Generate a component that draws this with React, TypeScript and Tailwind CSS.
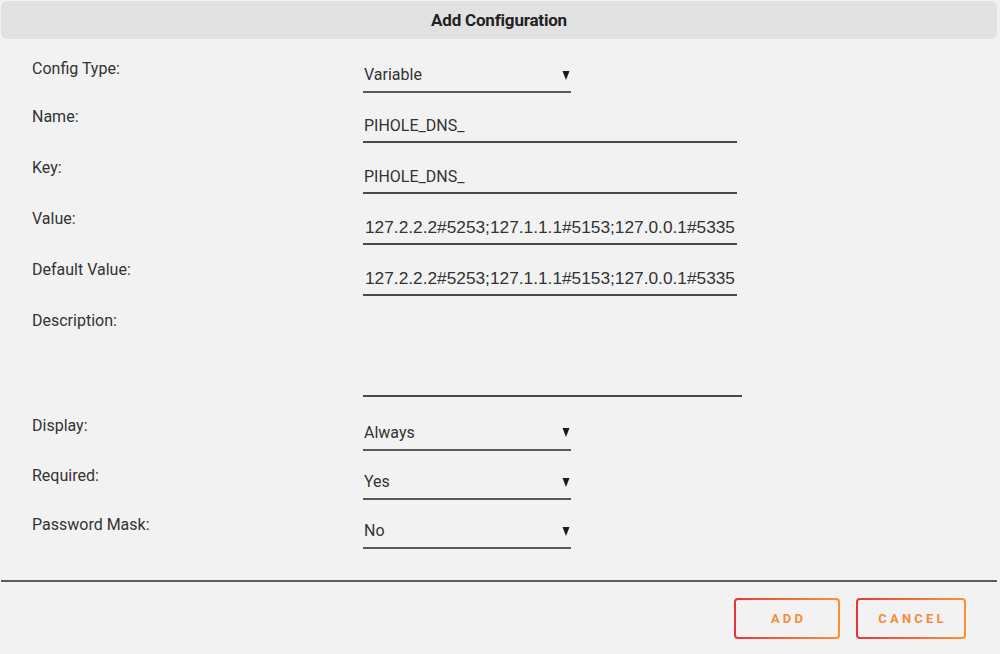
const SANS = "font-['Roboto','Liberation_Sans',sans-serif]";

type Row = {
  label: string;
  kind: "select" | "text" | "mono" | "area";
  value?: string;
  h: string;
  fieldCls: string;
};

const rows: Row[] = [
  { label: "Config Type:", kind: "select", value: "Variable", h: "h-[48px]", fieldCls: "mt-0 h-[34px]" },
  { label: "Name:", kind: "text", value: "PIHOLE_DNS_", h: "h-[51px]", fieldCls: "mt-[3px] h-[33px]" },
  { label: "Key:", kind: "text", value: "PIHOLE_DNS_", h: "h-[51px]", fieldCls: "mt-[3px] h-[33px]" },
  { label: "Value:", kind: "mono", value: "127.2.2.2#5253;127.1.1.1#5153;127.0.0.1#5335", h: "h-[51px]", fieldCls: "mt-[3px] h-[33px]" },
  { label: "Default Value:", kind: "mono", value: "127.2.2.2#5253;127.1.1.1#5153;127.0.0.1#5335", h: "h-[51px]", fieldCls: "mt-[3px] h-[33px]" },
  { label: "Description:", kind: "area", h: "h-[105px]", fieldCls: "mt-[3px] h-[83px]" },
  { label: "Display:", kind: "select", value: "Always", h: "h-[50px]", fieldCls: "mt-0 h-[35px]" },
  { label: "Required:", kind: "select", value: "Yes", h: "h-[49px]", fieldCls: "mt-0 h-[34px]" },
  { label: "Password Mask:", kind: "select", value: "No", h: "h-[49px]", fieldCls: "mt-0 h-[34px]" },
];

const Caret = () => (
  <svg width="8" height="9" viewBox="0 0 8 9" className="shrink-0 mr-[1px]">
    <polygon points="0.5,0 7.5,0 4,9" fill="#1a1a1a" />
  </svg>
);

const Field = ({ row }: { row: Row }) => {
  if (row.kind === "select") {
    return (
      <div
        className={`${row.fieldCls} w-[208px] flex items-center justify-between pl-[1px] border-b-2 border-[#5a5a5a] text-[16px] text-[#333]`}
      >
        <span>{row.value}</span>
        <Caret />
      </div>
    );
  }
  if (row.kind === "area") {
    return <div className={`${row.fieldCls} w-[379px] border-b-2 border-[#4a4a4a]`} />;
  }
  return (
    <div
      className={`${row.fieldCls} w-[374px] flex items-center border-b-2 border-[#4a4a4a] text-[#333] ${
        row.kind === "mono"
          ? "font-['Liberation_Sans',Arial,sans-serif] text-[17.3px] pl-[2px] pt-[-1px]"
          : "text-[16px] pl-[1px]"
      }`}
    >
      {row.value}
    </div>
  );
};

export default function App() {
  return (
    <div className={`w-[1000px] h-[654px] bg-[#f2f2f2] ${SANS} overflow-hidden`}>
      <div className="w-[996px] ml-[1px] pt-[1px]">
        {/* Header */}
        <div className="h-[38px] bg-[#e2e2e2] rounded-[6px] flex items-center justify-center pt-[2px]">
          <h1 className="text-[17px] font-bold text-[#222] tracking-[-0.2px]">
            Add Configuration
          </h1>
        </div>

        {/* Form rows */}
        <div className="pt-[20px]">
          {rows.map((row) => (
            <div key={row.label} className={`${row.h} flex items-start`}>
              <div className="w-[362px] pl-[31px] text-[16px] leading-[20px] text-[#333]">
                {row.label}
              </div>
              <Field row={row} />
            </div>
          ))}
        </div>

        {/* Footer */}
        <div className="mt-[16px] border-t-2 border-[#5c5c5c]" />
        <div className="flex justify-end gap-[16px] pr-[31px] pt-[16px]">
          {[
            { label: "ADD", w: "w-[106px]" },
            { label: "CANCEL", w: "w-[110px]" },
          ].map((b) => (
            <button
              key={b.label}
              className={`${b.w} h-[41px] rounded-[4px] p-[2px] bg-gradient-to-r from-[#e8313b] to-[#ff8f33]`}
            >
              <span className="w-full h-full rounded-[2px] bg-[#f2f2f2] flex items-center justify-center text-[13px] font-bold tracking-[3.2px] text-[#f68b3c] pl-[3px]">
                {b.label}
              </span>
            </button>
          ))}
        </div>
      </div>
    </div>
  );
}
